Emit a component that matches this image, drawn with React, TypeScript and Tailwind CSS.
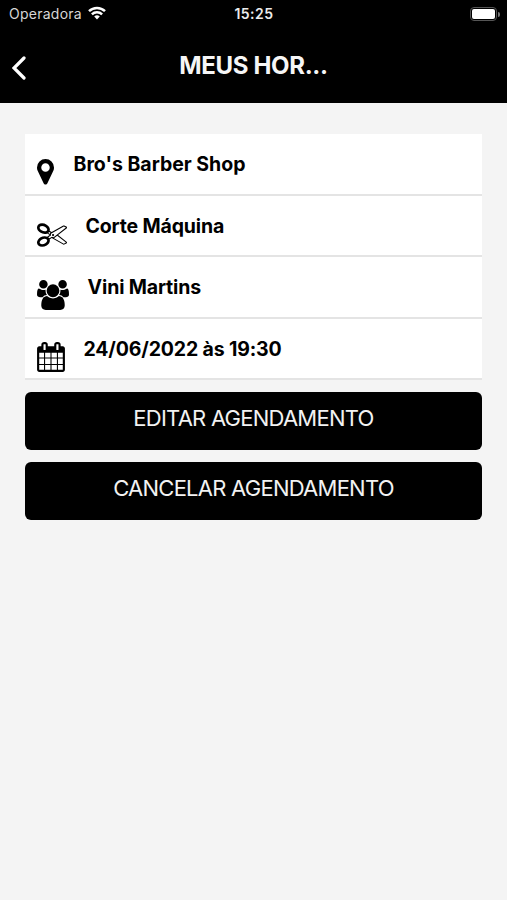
import type { ReactNode } from "react";

const PinIcon = () => (
  <svg viewBox="384 128 1024 1536" className="mt-[25px] h-[25.5px] w-[17px] shrink-0" fill="currentColor">
    <path d="M1152 640q0-106-75-181t-181-75-181 75-75 181 75 181 181 75 181-75 75-181zm256 0q0 109-33 179l-364 774q-16 33-47.5 52t-67.5 19-67.5-19-46.5-52l-365-774q-33-70-33-179 0-212 150-362t362-150 362 150 150 362z" />
  </svg>
);

const ScissorsIcon = () => (
  <svg viewBox="0 0 1792 1792" className="mt-[23px] size-[30px] shrink-0" fill="currentColor">
    <path d="M960 896q26 0 45 19t19 45-19 45-45 19-45-19-19-45 19-45 45-19zm300 64l507 398q28 20 25 56-5 35-35 51l-128 64q-13 7-29 7-17 0-31-8l-690-387-110 66q-8 4-12 5 14 49 10 97-7 77-56 147.5t-132 123.5q-132 84-277 84-136 0-222-78-90-84-79-207 7-76 56-147t131-124q132-84 278-84 83 0 151 31 9-13 22-22l122-73-122-73q-13-9-22-22-68 31-151 31-146 0-278-84-82-53-131-124t-56-147q-5-59 15.5-113t63.5-93q85-79 222-79 145 0 277 84 83 52 132 123t56 148q4 48-10 97 4 1 12 5l110 66 690-387q14-8 31-8 16 0 29 7l128 64q30 16 35 51 3 36-25 56zm-681-260q46-42 21-108t-106-117q-92-59-192-59-74 0-113 36-46 42-21 108t106 117q92 59 192 59 74 0 113-36zm-85 745q81-51 106-117t-21-108q-39-36-113-36-100 0-192 59-81 51-106 117t21 108q39 36 113 36 100 0 192-59zm178-613l96 58v-11q0-36 33-56l14-8-79-44-26 26q-3 3-10 11t-12 12q-2 2-4 3.5t-3 2.5zm224 224l96 32 736-576-128-64-768 431v113l-160 96 9 8q2 2 7 6 4 4 11 12t11 12l26 26zm704 416l128-64-520-408-177 138q-2 3-13 7z" />
  </svg>
);

const UsersIcon = () => (
  <svg viewBox="0 0 1920 1792" className="mt-[23px] h-[30px] w-8 shrink-0" fill="currentColor">
    <path d="M593 896q-162 5-265 128h-134q-82 0-138-40.500t-56-118.500q0-353 124-353 6 0 43.500 21t97.500 42.500 119 21.500q67 0 133-23-5 37-5 66 0 139 81 256zm1071 637q0 120-73 189.500t-194 69.500h-874q-121 0-194-69.500t-73-189.500q0-53 3.500-103.500t14-109 26.500-108.500 43-97.500 62-81 85.500-53.500 111.500-20q10 0 43 21.500t73 48 107 48 135 21.500 135-21.500 107-48 73-48 43-21.500q61 0 111.500 20t85.500 53.500 62 81 43 97.500 26.500 108.500 14 109 3.500 103.500zm-1024-1277q0 106-75 181t-181 75-181-75-75-181 75-181 181-75 181 75 75 181zm704 384q0 159-112.500 271.500t-271.500 112.500-271.500-112.500-112.500-271.500 112.500-271.500 271.500-112.500 271.500 112.500 112.500 271.500zm576 225q0 78-56 118.500t-138 40.500h-134q-103-123-265-128 81-117 81-256 0-29-5-66 66 23 133 23 59 0 119-21.500t97.500-42.500 43.500-21q124 0 124 353zm-128-609q0 106-75 181t-181 75-181-75-75-181 75-181 181-75 181 75 75 181z" />
  </svg>
);

const CalendarIcon = () => (
  <svg viewBox="64 0 1664 1792" className="mt-[23.5px] h-[30px] w-[28px] shrink-0" fill="currentColor">
    <path d="M192 1664h288v-288h-288v288zm352 0h320v-288h-320v288zm-352-352h288v-320h-288v320zm352 0h320v-320h-320v320zm-352-384h288v-288h-288v288zm736 736h320v-288h-320v288zm-384-736h320v-288h-320v288zm768 736h288v-288h-288v288zm-384-352h320v-320h-320v320zm-352-864v-288q0-13-9.5-22.5t-22.5-9.5h-64q-13 0-22.5 9.5t-9.5 22.5v288q0 13 9.500 22.500t22.500 9.500h64q13 0 22.500-9.500t9.500-22.500zm736 864h288v-320h-288v320zm-384-384h320v-288h-320v288zm384 0h288v-288h-288v288zm32-480v-288q0-13-9.500-22.500t-22.500-9.500h-64q-13 0-22.500 9.500t-9.500 22.500v288q0 13 9.500 22.500t22.500 9.500h64q13 0 22.500-9.500t9.500-22.500zm384-64v1280q0 52-38 90t-90 38h-1408q-52 0-90-38t-38-90v-1280q0-52 38-90t90-38h128v-96q0-66 47-113t113-47h64q66 0 113 47t47 113v96h384v-96q0-66 47-113t113-47h64q66 0 113 47t47 113v96h128q52 0 90 38t38 90z" />
  </svg>
);

type Detail = { icon: ReactNode; label: string; text: string };

const details: Detail[] = [
  { icon: <PinIcon />, label: "Bro's Barber Shop", text: "ml-[19.4px]" },
  { icon: <ScissorsIcon />, label: "Corte Máquina", text: "ml-[18.4px] tracking-[-0.15px]" },
  { icon: <UsersIcon />, label: "Vini Martins", text: "ml-[18.5px] tracking-[-0.15px]" },
  { icon: <CalendarIcon />, label: "24/06/2022 às 19:30", text: "ml-[18.4px] tracking-[-0.15px]" },
];

const StatusBar = () => (
  <div className="grid h-7 grid-cols-3 items-center text-white">
    <div className="flex items-center gap-[6px] pl-[9px]">
      <span className="text-[14px] leading-7 tracking-[0.25px] text-[#d6d6d6]">Operadora</span>
      <svg viewBox="0 0 18 14" className="-mt-0.5 h-[14px] w-[18px]" fill="none" stroke="currentColor" strokeWidth="2.5">
        <path d="M1 5.1a11.6 11.6 0 0 1 16 0" />
        <path d="M3.9 8.4a7.3 7.3 0 0 1 10.2 0" />
        <path d="M9 13.4 6.200 10.600a4 4 0 0 1 5.600 0z" fill="currentColor" stroke="none" />
      </svg>
    </div>
    <span className="pl-px text-center text-[14px] leading-7 font-semibold tracking-[0.5px] text-[#ececec]">15:25</span>
    <div className="flex items-center justify-end pr-[7px]">
      <div className="h-[14px] w-[27px] rounded-[4px] border border-[#555] p-px">
        <div className="h-full rounded-[2px] bg-white" />
      </div>
      <div className="ml-px h-[5px] w-[2px] rounded-r-full bg-[#777]" />
    </div>
  </div>
);

const App = () => {
  return (
    <div className="min-h-screen w-full bg-[#f4f4f4] font-['Inter',sans-serif] text-black">
      <header className="h-[103.4px] bg-black">
        <StatusBar />
        <div className="grid h-[75px] grid-cols-[1fr_auto_1fr] items-start text-white">
          <svg viewBox="0 0 14 24" className="mt-[28px] ml-[12px] h-6 w-[14px]" fill="none" stroke="currentColor" strokeWidth="3.2" strokeLinecap="round" strokeLinejoin="miter">
            <path d="M12 2 2 12l10 10" />
          </svg>
          <h1 className="mt-[22px] text-[24px] leading-8 font-bold tracking-[-0.35px] whitespace-nowrap text-[#f6f6f6]">
            MEUS HOR...
          </h1>
        </div>
      </header>

      <main className="px-[25px] pt-[30.8px]">
        <ul>
          {details.map((detail) => (
            <li key={detail.label} className="flex h-[61.5px] items-start border-b-2 border-[#e4e4e4] bg-white pl-[12.1px]">
              {detail.icon}
              <span className={`mt-[18px] text-[19.5px] leading-6 font-bold whitespace-nowrap ${detail.text}`}>
                {detail.label}
              </span>
            </li>
          ))}
        </ul>

        <div className="mt-3 flex flex-col gap-3">
          <button className="h-[58px] rounded-[6px] bg-black pb-[6px] text-[22px] leading-7 tracking-[-0.75px] text-[#f2f2f2]">
            EDITAR AGENDAMENTO
          </button>
          <button className="h-[58px] rounded-[6px] bg-black pb-[6px] text-[22px] leading-7 tracking-[-0.75px] text-[#f2f2f2]">
            CANCELAR AGENDAMENTO
          </button>
        </div>
      </main>
    </div>
  );
};

export default App;
